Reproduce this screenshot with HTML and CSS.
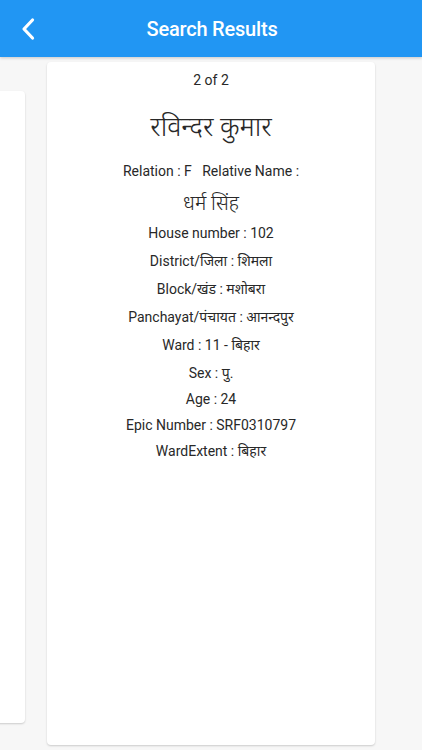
FILE: index.html
```html
<!DOCTYPE html>
<html>
<head>
<meta charset="utf-8">
<link rel="stylesheet" href="styles.css">
</head>
<body>
<header class="bar">
  <svg class="back" width="16" height="24" viewBox="0 0 16 24"><path d="M12.5 3 L4 12 L12.5 21" fill="none" stroke="#fff" stroke-width="3.2" stroke-linecap="round" stroke-linejoin="round"/></svg>
  <div class="title">Search Results</div>
</header>
<main class="stage">
  <div class="card side"></div>
  <div class="card main">
    <div class="count">2 of 2</div>
    <div class="name">रविन्दर कुमार</div>
    <div class="line rel">Relation : F &nbsp; Relative Name :</div>
    <div class="relname">धर्म सिंह</div>
    <div class="line first">House number : 102</div>
    <div class="line">District/जिला : शिमला</div>
    <div class="line">Block/खंड : मशोबरा</div>
    <div class="line">Panchayat/पंचायत : आनन्दपुर</div>
    <div class="line">Ward : 11 - बिहार</div>
    <div class="line">Sex : पु.</div>
    <div class="line tight">Age : 24</div>
    <div class="line tight">Epic Number : SRF0310797</div>
    <div class="line tight">WardExtent : बिहार</div>
  </div>
</main>
</body>
</html>
```
FILE: styles.css
```css
html, body { margin: 0; padding: 0; }
body {
  width: 422px; height: 750px; overflow: hidden;
  background: #f7f7f7;
  font-family: Roboto, "Noto Sans", "Noto Sans Devanagari", sans-serif;
  color: #282828;
}
.bar {
  height: 57px; background: #2196f3;
  display: flex; align-items: center; justify-content: center;
  position: relative;
  box-shadow: 0 1px 3px rgba(0,0,0,0.2);
}
.back { position: absolute; left: 20px; top: 17px; }
.title { color: #fff; font-size: 20px; font-weight: 500; letter-spacing: -0.2px; margin-left: 2px; }
.stage {
  position: relative; height: 693px;
}
.card {
  background: #fff; border-radius: 4px;
  box-shadow: 0 1px 2px rgba(0,0,0,0.18);
}
.side { position: absolute; left: -10px; top: 29px; width: 35px; height: 632px; }
.main {
  margin: 5px 0 0 47px; width: 328px; height: 683px;
  display: flex; flex-direction: column; align-items: center;
  text-align: center;
}
.count { font-size: 14px; margin-top: 9px; line-height: 18px; }
.name { font-size: 27px; margin-top: 19px; line-height: 38px; font-weight: 300; }
.line { font-size: 14px; line-height: 18px; margin-top: 10px; }
.rel { margin-top: 16px; }
.relname { font-size: 20px; line-height: 28px; margin-top: 9px; font-weight: 300; }
.line.first { margin-top: 7px; }
.line.tight { margin-top: 8px; }
```
